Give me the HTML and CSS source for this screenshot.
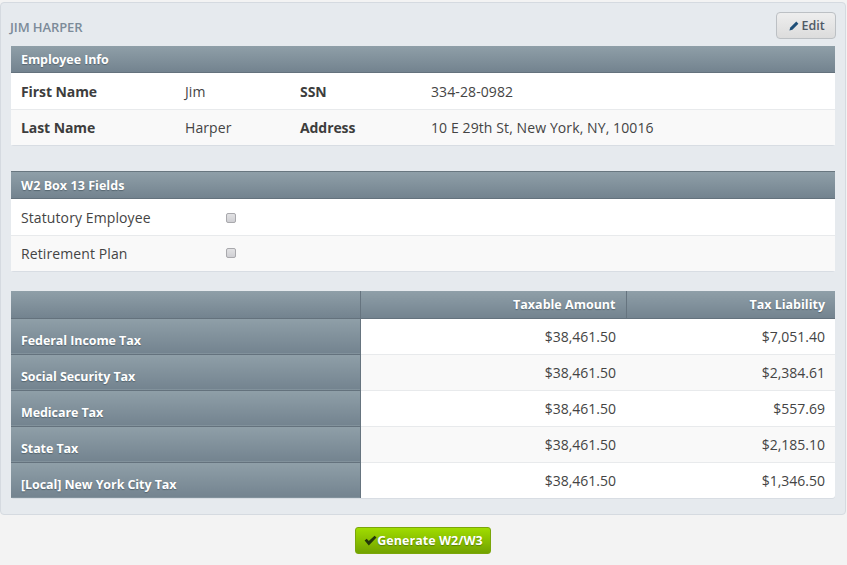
FILE: index.html
```html
<!DOCTYPE html>
<html lang="en">
<head>
<meta charset="utf-8">
<title>Jim Harper</title>
<link rel="stylesheet" href="styles.css">
</head>
<body>
<main class="panel">
  <header class="panel-head">
    <h1 class="name">JIM HARPER</h1>
    <button class="btn-edit" type="button">
      <svg class="pencil" width="10" height="10" viewBox="0 0 10 10"><path d="M7.3.6l2.1 2.1-6 6L.4 9.6l.9-3z" fill="#1f4f78"/></svg>Edit
    </button>
  </header>

  <section class="card card-info">
    <h2 class="card-title">Employee Info</h2>
    <table class="grid info">
      <tr><th>First Name</th><td>Jim</td><th>SSN</th><td>334-28-0982</td></tr>
      <tr class="alt"><th>Last Name</th><td>Harper</td><th>Address</th><td>10 E 29th St, New York, NY, 10016</td></tr>
    </table>
  </section>

  <section class="card card-box">
    <h2 class="card-title card-title-box">W2 Box 13 Fields</h2>
    <table class="grid box">
      <tr><td>Statutory Employee</td><td><span class="check"></span></td></tr>
      <tr class="alt"><td>Retirement Plan</td><td><span class="check"></span></td></tr>
    </table>
  </section>

  <section class="card">
    <table class="grid tax">
      <thead>
        <tr><th></th><th>Taxable Amount</th><th>Tax Liability</th></tr>
      </thead>
      <tbody>
        <tr><th>Federal Income Tax</th><td>$38,461.50</td><td>$7,051.40</td></tr>
        <tr class="alt"><th>Social Security Tax</th><td>$38,461.50</td><td>$2,384.61</td></tr>
        <tr><th>Medicare Tax</th><td>$38,461.50</td><td>$557.69</td></tr>
        <tr class="alt"><th>State Tax</th><td>$38,461.50</td><td>$2,185.10</td></tr>
        <tr><th>[Local] New York City Tax</th><td>$38,461.50</td><td>$1,346.50</td></tr>
      </tbody>
    </table>
  </section>
</main>
<footer class="actions">
  <button class="btn-generate" type="button">
    <svg class="tick" width="13" height="11" viewBox="0 0 13 11"><path d="M.6 5.6l2.1-1.9 2.1 2.2L10.6.8l1.9 1.7-7.7 7.9z" fill="#24380a"/></svg>Generate W2/W3
  </button>
</footer>
</body>
</html>
```
FILE: styles.css
```css
* { box-sizing: border-box; }

html, body { margin: 0; padding: 0; }

body {
  background: #f3f3f3;
  color: #444;
  font-family: "Open Sans", sans-serif;
  font-size: 14px;
  padding-top: 2px;
  height: 565px;
  overflow: hidden;
}

.panel {
  background: #e6eaee;
  border: 1px solid #d5dae0;
  border-radius: 4px;
  height: 513px;
  margin-right: 1px;
  padding: 9px 10px 0;
}

.panel-head {
  display: flex;
  justify-content: space-between;
  align-items: flex-start;
  height: 34px;
}

.name {
  margin: 7px 0 0 -1px;
  font-size: 13px;
  line-height: 16px;
  font-weight: 600;
  letter-spacing: -.1px;
  color: #7c8b99;
}

.btn-edit {
  width: 60px;
  height: 27px;
  margin-right: -1px;
  padding: 0 0 0 2px;
  display: flex;
  align-items: center;
  justify-content: center;
  gap: 2px;
  font: 600 12.5px "Open Sans", sans-serif;
  color: #4f5a66;
  background: linear-gradient(#eeeeee, #dcdcdc);
  border: 1px solid #bcc0c4;
  border-radius: 4px;
}

.card {
  background: #fff;
  box-shadow: 0 1px 0 #d8dde3;
  border-radius: 0 0 3px 3px;
}

.card-info { height: 99px; margin-bottom: 26px; }
.card-box { height: 100px; margin-bottom: 20px; }

.card-title {
  margin: 0;
  height: 27px;
  padding: 0 10px;
  font-size: 12.5px;
  line-height: 27px;
  font-weight: 700;
  letter-spacing: -.08px;
  color: #fff;
  text-shadow: 0 1px 1px rgba(40, 55, 65, .45);
  background: linear-gradient(#8f9fa8, #73838f);
  border-bottom: 1px solid #64727d;
}

.card-title-box {
  height: 28px;
  letter-spacing: .05px;
  border-top: 1px solid #68767f;
}

.grid {
  width: 100%;
  border-collapse: collapse;
  table-layout: fixed;
}

.grid td, .grid th {
  padding: 0 10px;
  height: 36px;
  border-top: 1px solid #e8eaec;
}

.grid tr:first-child > * { border-top: 0; }

.alt { background: #f9f9f9; }

.info th {
  text-align: left;
  font-weight: 700;
  letter-spacing: -.08px;
  color: #3d3d3d;
}

.info td, .box td { letter-spacing: .1px; }

.info tr:first-child > *, .box tr:first-child > * { padding-top: 2px; }

.info tr > :nth-child(1) { width: 164px; }
.info tr > :nth-child(2) { width: 115px; }
.info tr > :nth-child(3) { width: 131px; }

.box tr > :nth-child(1) { width: 205px; }

.check {
  display: block;
  width: 10px;
  height: 10px;
  border: 1px solid #a9a9ad;
  border-radius: 2px;
  background: linear-gradient(#e2e2e4, #cfcfd3);
}

.tax tr > :nth-child(1) { width: 349px; }
.tax tr > :nth-child(2) { width: 266px; }

.tax thead th {
  height: 27px;
  font-size: 12.5px;
  font-weight: 700;
  text-align: right;
  color: #fff;
  text-shadow: 0 1px 1px rgba(40, 55, 65, .45);
  background: linear-gradient(#8f9fa8, #73838f);
  border-bottom: 1px solid #64727d;
  border-right: 1px solid #66747f;
}

.tax thead th:last-child { border-right: 0; }

.tax tbody th {
  padding-top: 9px;
  font-size: 12.5px;
  font-weight: 700;
  letter-spacing: -.08px;
  text-align: left;
  color: #fff;
  text-shadow: 0 1px 1px rgba(40, 55, 65, .45);
  background: linear-gradient(#8f9fa8, #73838f);
  border-top: 0;
  border-bottom: 1px solid #64727d;
  border-right: 1px solid #66747f;
}

.tax tbody tr:last-child th { border-bottom: 0; }

.tax td { text-align: right; }

.actions {
  display: flex;
  justify-content: center;
  padding: 12px 1px 0 0;
}

.btn-generate {
  width: 136px;
  height: 27px;
  padding: 0 0 0 1px;
  display: flex;
  align-items: center;
  justify-content: center;
  gap: 0;
  font: 700 12.5px "Open Sans", sans-serif;
  letter-spacing: .05px;
  color: #fff;
  text-shadow: 0 1px 1px rgba(50, 80, 0, .5);
  background: linear-gradient(#a0dc00, #72a300);
  border: 1px solid #7aa60a;
  border-radius: 3px;
}
```
